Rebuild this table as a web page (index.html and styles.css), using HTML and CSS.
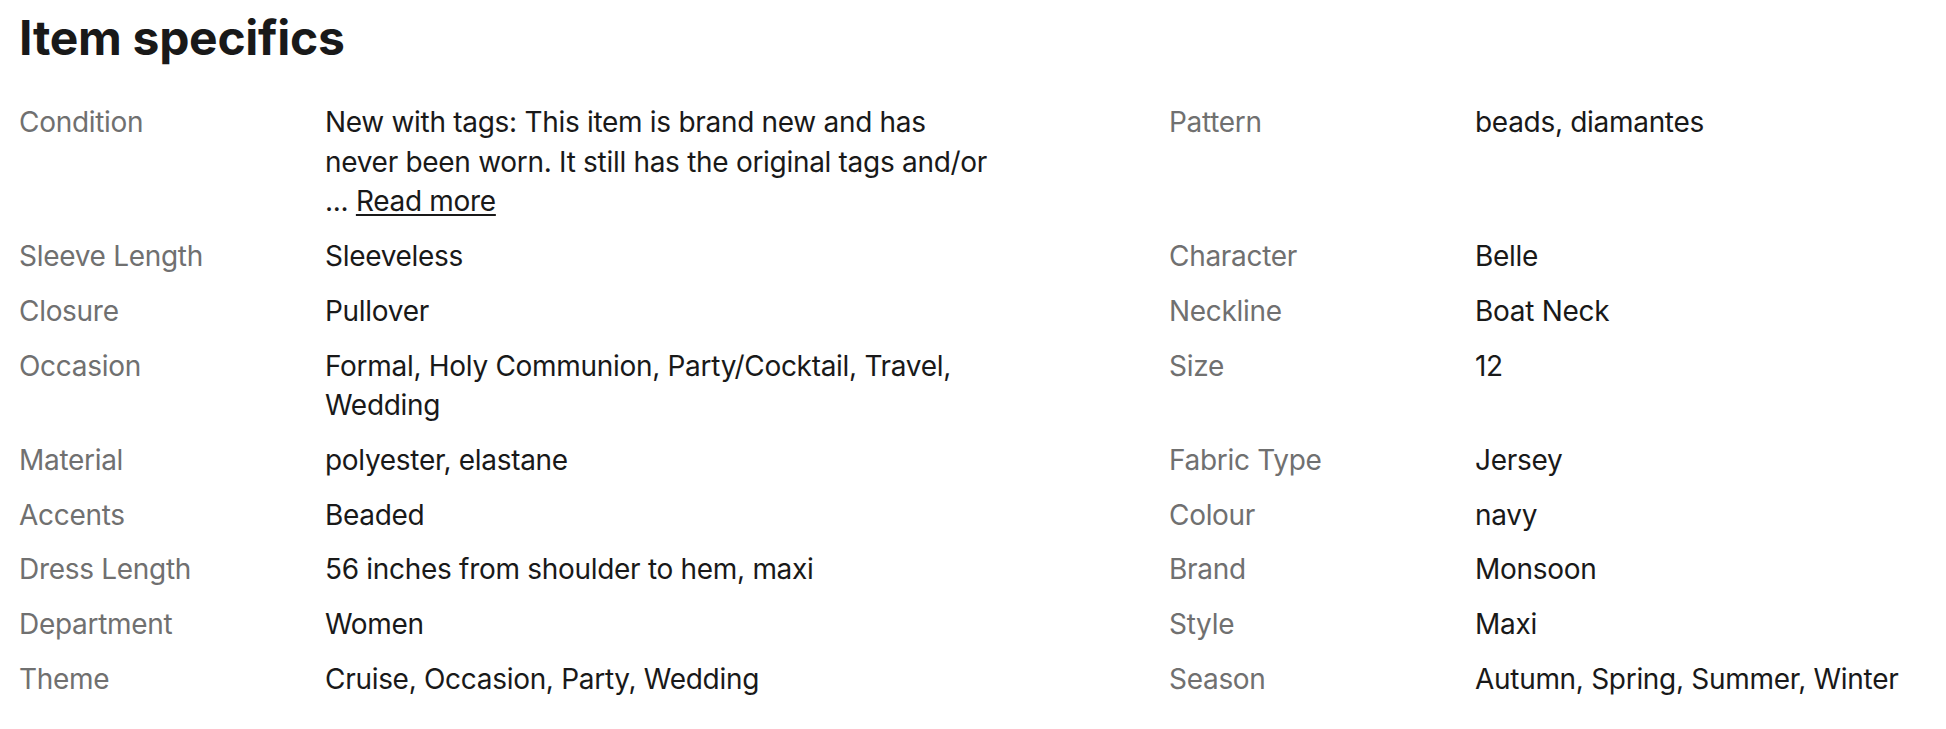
FILE: index.html
```html
<!DOCTYPE html>
<html lang="en">
<head>
<meta charset="utf-8">
<title>Item specifics</title>
<link rel="stylesheet" href="styles.css">
</head>
<body>
<section class="specs">
  <h2 class="specs__title">Item specifics</h2>
  <div class="specs__list">
    <div class="row">
      <div class="pair"><div class="label">Condition</div><div class="value">New with tags: This item is brand new and has never been worn. It still has the original tags and/or ... <a class="more" href="#">Read more</a></div></div>
      <div class="pair"><div class="label">Pattern</div><div class="value">beads, diamantes</div></div>
    </div>
    <div class="row">
      <div class="pair"><div class="label">Sleeve Length</div><div class="value">Sleeveless</div></div>
      <div class="pair"><div class="label">Character</div><div class="value">Belle</div></div>
    </div>
    <div class="row">
      <div class="pair"><div class="label">Closure</div><div class="value">Pullover</div></div>
      <div class="pair"><div class="label">Neckline</div><div class="value">Boat Neck</div></div>
    </div>
    <div class="row">
      <div class="pair"><div class="label">Occasion</div><div class="value">Formal, Holy Communion, Party/Cocktail, Travel, Wedding</div></div>
      <div class="pair"><div class="label">Size</div><div class="value">12</div></div>
    </div>
    <div class="row">
      <div class="pair"><div class="label">Material</div><div class="value">polyester, elastane</div></div>
      <div class="pair"><div class="label">Fabric Type</div><div class="value">Jersey</div></div>
    </div>
    <div class="row">
      <div class="pair"><div class="label">Accents</div><div class="value">Beaded</div></div>
      <div class="pair"><div class="label">Colour</div><div class="value">navy</div></div>
    </div>
    <div class="row">
      <div class="pair"><div class="label">Dress Length</div><div class="value">56 inches from shoulder to hem, maxi</div></div>
      <div class="pair"><div class="label">Brand</div><div class="value">Monsoon</div></div>
    </div>
    <div class="row">
      <div class="pair"><div class="label">Department</div><div class="value">Women</div></div>
      <div class="pair"><div class="label">Style</div><div class="value">Maxi</div></div>
    </div>
    <div class="row">
      <div class="pair"><div class="label">Theme</div><div class="value">Cruise, Occasion, Party, Wedding</div></div>
      <div class="pair"><div class="label">Season</div><div class="value">Autumn, Spring, Summer, Winter</div></div>
    </div>
  </div>
</section>
</body>
</html>
```
FILE: styles.css
```css
html, body {
  margin: 0;
  padding: 0;
  background: #ffffff;
}
body {
  font-family: Inter, "Noto Sans", "Liberation Sans", sans-serif;
  color: #191919;
}
.specs {
  padding: 8px 0 0 19px;
}
.specs__title {
  margin: 0 0 35px;
  font-size: 48px;
  line-height: 60px;
  font-weight: 700;
  letter-spacing: -0.3px;
  color: #191919;
}
.specs__list {
  display: flex;
  flex-direction: column;
  gap: 15px;
}
.row {
  display: grid;
  grid-template-columns: 1150px 1fr;
}
.pair {
  display: grid;
  grid-template-columns: 306px 1fr;
  font-size: 28px;
  line-height: 39.7px;
  letter-spacing: -0.3px;
}
.label {
  color: #707070;
}
.value {
  color: #191919;
  max-width: 670px;
}
.more {
  color: #191919;
  text-decoration: underline;
  text-decoration-thickness: 2px;
  text-underline-offset: 3px;
}
```
